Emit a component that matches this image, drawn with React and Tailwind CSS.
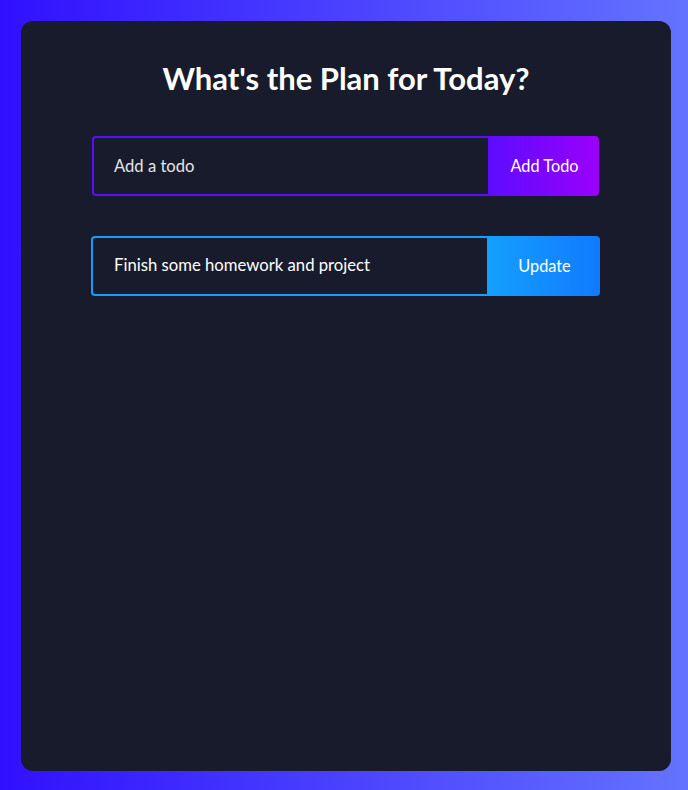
import React from "react";

export default function App() {
  return (
    <div className="min-h-[790px] w-full bg-[linear-gradient(90deg,#3010ff_0%,#6473ff_100%)] py-[21px] font-['Lato','Noto_Sans',sans-serif]">
      <div className="ml-[21px] flex h-[750px] w-[650px] flex-col items-start rounded-[12px] bg-[#181b2b]">
        <h1 className="mt-[37px] self-center text-[31px] font-bold leading-[40px] text-white">
          What's the Plan for Today?
        </h1>
        <div className="ml-[71px] mt-[38px] flex h-[60px] w-[507px]">
          <div className="flex flex-1 items-center rounded-l-[4px] border-2 border-[#5d0cff] pl-[20px] text-[16.6px] text-[#e6e6e6]">
            Add a todo
          </div>
          <button className="w-[109px] rounded-r-[4px] bg-[linear-gradient(90deg,#5d0cff_0%,#9b00fa_100%)] text-[16.3px] text-white">
            Add Todo
          </button>
        </div>
        <div className="ml-[70px] mt-[40px] flex h-[60px] w-[509px]">
          <div className="flex flex-1 items-center rounded-l-[4px] border-2 border-[#149fff] pl-[21px] text-[16.7px] text-white">
            Finish some homework and project
          </div>
          <button className="w-[111px] rounded-r-[4px] bg-[linear-gradient(90deg,#149fff_0%,#117aff_100%)] text-[16.3px] text-white">
            Update
          </button>
        </div>
      </div>
    </div>
  );
}
